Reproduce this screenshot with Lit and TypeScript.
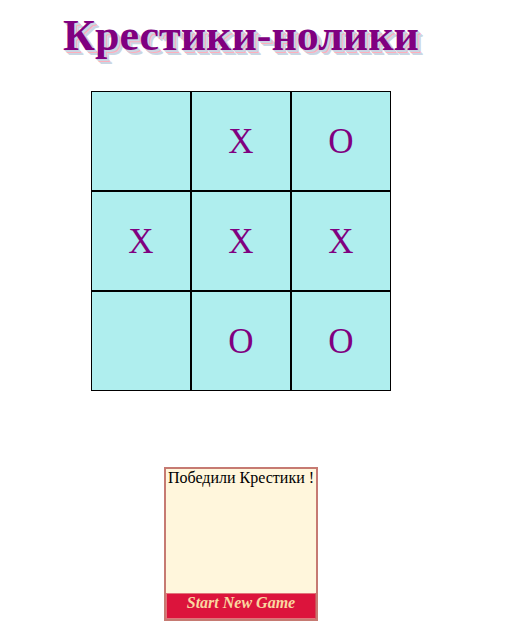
import { LitElement, html, css } from "lit";
import { customElement, state } from "lit/decorators.js";

@customElement("app-root")
export class AppRoot extends LitElement {
  static styles = css`
    :host {
      display: block;
      font-family: "Liberation Serif", "Times New Roman", serif;
      font-size: 16px;
      color: #000;
    }
    .game {
      display: flex;
      flex-direction: column;
      align-items: center;
      padding: 10px 43px 16px 0;
    }
    .title {
      margin: 0;
      font-size: 44px;
      line-height: 52px;
      font-weight: bold;
      color: purple;
      text-shadow: 1px 1px 0 #cbd5e3, 2px 2px 0 #cbd5e3, 3px 3px 0 #ffaebb,
        4px 4px 0 #c9d6e3, 5px 5px 0 #c9d6e3;
    }
    .board {
      display: grid;
      grid-template-columns: repeat(3, 100px);
      grid-auto-rows: 100px;
      margin-top: 29px;
    }
    .cell {
      box-sizing: border-box;
      margin: 0;
      padding: 2px 0 0;
      border: 1px solid #000;
      border-radius: 0;
      background: #afeeee;
      color: purple;
      font: 35px "Liberation Serif", "Times New Roman", serif;
    }
    .result {
      box-sizing: border-box;
      display: flex;
      flex-direction: column;
      width: 154px;
      min-height: 154px;
      margin-top: 76px;
      border: 2px solid #c67a72;
      background: #fff6dc;
      text-align: center;
    }
    .message {
      flex: 1;
      margin: 0;
      line-height: 18px;
    }
    .restart {
      box-sizing: border-box;
      height: 26px;
      margin: 0;
      padding: 0 0 6px;
      border: 1px solid #e2737a;
      border-right-color: #d04a56;
      border-radius: 0;
      background: crimson;
      color: #fad7a0;
      font: italic bold 16px "Liberation Serif", "Times New Roman", serif;
    }
  `;

  @state() private cells = ["", "X", "O", "X", "X", "X", "", "O", "O"];

  private reset() {
    this.cells = Array(9).fill("");
  }

  render() {
    return html`
      <main class="game">
        <h1 class="title">Крестики-нолики</h1>
        <div class="board">
          ${this.cells.map(
            (mark, i) => html`<button class="cell" aria-label="${i + 1} ${mark}">${mark}</button>`
          )}
        </div>
        <section class="result">
          <p class="message">Победили Крестики !</p>
          <button class="restart" @click=${this.reset}>Start New Game</button>
        </section>
      </main>
    `;
  }
}
